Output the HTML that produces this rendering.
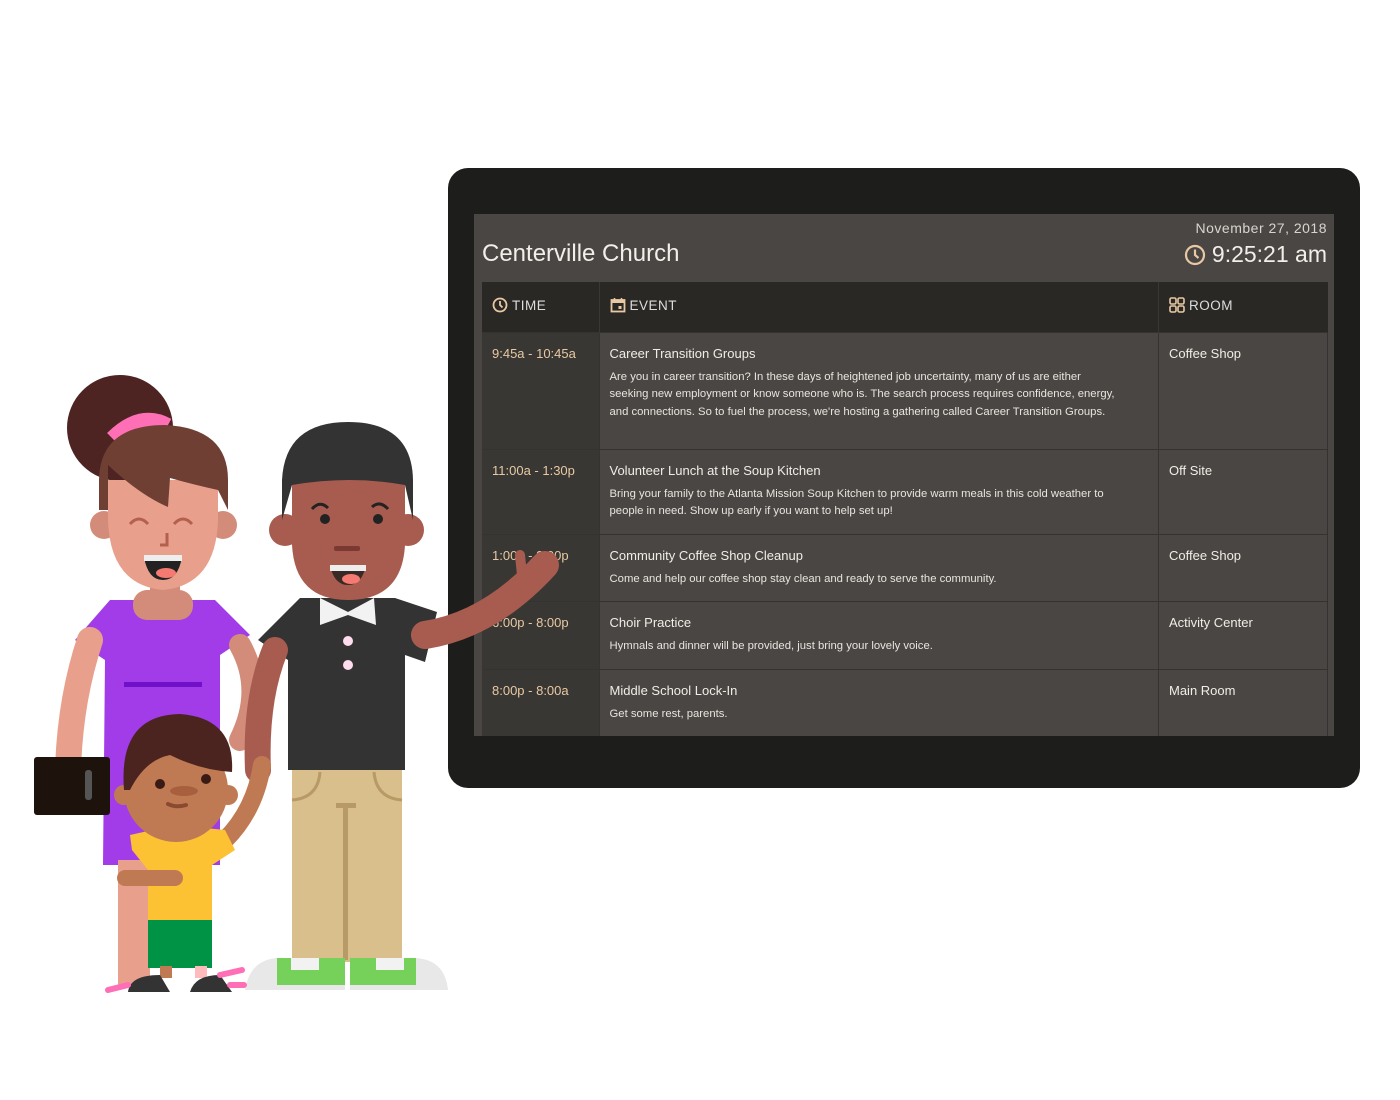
<!DOCTYPE html>
<html><head><meta charset="utf-8"><style>
*{margin:0;padding:0;box-sizing:border-box}
body{width:1400px;height:1100px;background:#fff;position:relative;overflow:hidden;font-family:"Liberation Sans",sans-serif}
.frame{position:absolute;left:448px;top:168px;width:912px;height:620px;background:#1d1d1b;border-radius:20px}
.screen{position:absolute;left:474px;top:214px;width:860px;height:522px;background:#4a4643}
.title{position:absolute;left:8px;top:26px;font-size:24px;color:#f2efea}
.date{position:absolute;right:7px;top:6px;font-size:14px;color:#d8d4cf;letter-spacing:.5px}
.clock{position:absolute;right:7px;top:27px;font-size:23px;color:#f2efea;display:flex;align-items:center;gap:6px}
table{position:absolute;left:8px;top:68px;width:846px;border-collapse:collapse;table-layout:fixed}
th{height:50px;background:#2a2825;color:#ddd;font-weight:normal;font-size:13.5px;text-align:left;padding-left:10px;letter-spacing:.5px;border-right:1px solid #3a3835}
th span{display:inline-flex;align-items:center;gap:4px}
td{vertical-align:top;padding:13px 10px;font-size:13px;color:#f0ece6;border-top:1px solid #353331;border-right:1px solid #353331}
td.t{background:#393733;color:#e8c9a4}
td p{font-size:11.3px;line-height:17.5px;margin-top:8px;color:#e8e4de;padding-right:28px}
</style></head><body>
<div class="frame"></div>
<div class="screen">
<div class="title">Centerville Church</div>
<div class="date">November 27, 2018</div>
<div class="clock"><svg width="22" height="22" viewBox="0 0 22 22"><circle cx="11" cy="11" r="9" fill="none" stroke="#e8c9a4" stroke-width="2.2"/><path d="M11 5.5V11l3.5 3" fill="none" stroke="#e8c9a4" stroke-width="2.2"/></svg>9:25:21 am</div>
<table>
<tr><th style="width:117px"><span><svg width="16" height="16" viewBox="0 0 16 16"><circle cx="8" cy="8" r="6.5" fill="none" stroke="#e8c9a4" stroke-width="1.8"/><path d="M8 4v4l2.5 2.5" fill="none" stroke="#e8c9a4" stroke-width="1.8"/></svg>TIME</span></th>
<th><span><svg width="16" height="16" viewBox="0 0 16 16"><rect x="1.5" y="3" width="13" height="11.5" fill="none" stroke="#e8c9a4" stroke-width="1.8"/><rect x="1.5" y="3" width="13" height="3" fill="#e8c9a4"/><path d="M4.5 1v3M11.5 1v3" stroke="#e8c9a4" stroke-width="1.6"/><rect x="8.5" y="9" width="3" height="3" fill="#e8c9a4"/></svg>EVENT</span></th>
<th style="width:169px;border-right:none"><span><svg width="16" height="16" viewBox="0 0 16 16" fill="none" stroke="#e8c9a4" stroke-width="1.6"><rect x="1" y="1" width="6" height="6" rx="1.5"/><rect x="9" y="1" width="6" height="6" rx="1.5"/><rect x="1" y="9" width="6" height="6" rx="1.5"/><rect x="9" y="9" width="6" height="6" rx="1.5"/></svg>ROOM</span></th></tr>
<tr style="height:117px"><td class="t">9:45a - 10:45a</td><td>Career Transition Groups<p>Are you in career transition? In these days of heightened job uncertainty, many of us are either seeking new employment or know someone who is. The search process requires confidence, energy, and connections. So to fuel the process, we're hosting a gathering called Career Transition Groups.</p></td><td>Coffee Shop</td></tr>
<tr style="height:83px"><td class="t">11:00a - 1:30p</td><td>Volunteer Lunch at the Soup Kitchen<p>Bring your family to the Atlanta Mission Soup Kitchen to provide warm meals in this cold weather to people in need. Show up early if you want to help set up!</p></td><td>Off Site</td></tr>
<tr style="height:66px"><td class="t">1:00p - 2:00p</td><td>Community Coffee Shop Cleanup<p>Come and help our coffee shop stay clean and ready to serve the community.</p></td><td>Coffee Shop</td></tr>
<tr style="height:66px"><td class="t">6:00p - 8:00p</td><td>Choir Practice<p>Hymnals and dinner will be provided, just bring your lovely voice.</p></td><td>Activity Center</td></tr>
<tr style="height:66px"><td class="t">8:00p - 8:00a</td><td>Middle School Lock-In<p>Get some rest, parents.</p></td><td>Main Room</td></tr>
</table>
</div>
<svg style="position:absolute;left:0;top:0" width="1400" height="1100" viewBox="0 0 1400 1100">
<circle cx="120" cy="428" r="53" fill="#4e2422"/>
<path d="M112 438 Q140 410 168 425" stroke="#ff6fb5" stroke-width="14" fill="none"/>
<path d="M75 640 L110 600 L215 600 L250 635 L220 655 L220 865 L103 865 L105 660 Z" fill="#a23ce8"/>
<rect x="124" y="682" width="78" height="5" fill="#7010c8"/>
<path d="M90 640 Q70 700 68 770" stroke="#e8a08c" stroke-width="26" fill="none" stroke-linecap="round"/>
<path d="M240 645 Q265 690 240 740" stroke="#d48c7a" stroke-width="22" fill="none" stroke-linecap="round"/>
<rect x="34" y="757" width="76" height="58" rx="3" fill="#1e120d"/>
<rect x="85" y="770" width="7" height="30" rx="3" fill="#555"/>
<rect x="118" y="860" width="32" height="125" fill="#e8a08c"/>
<rect x="150" y="555" width="30" height="40" fill="#d48c7a"/>
<rect x="133" y="590" width="60" height="30" rx="14" fill="#d48c7a"/>
<circle cx="104" cy="525" r="14" fill="#d48c7a"/><circle cx="223" cy="525" r="14" fill="#d48c7a"/>
<path d="M108 480 L108 520 Q110 585 163 590 Q216 585 218 520 L218 480 Z" fill="#e8a08c"/>
<path d="M99 510 L99 480 Q100 425 165 425 Q228 428 228 480 L228 510 L218 490 Q195 485 170 478 L168 507 Q140 495 108 465 L108 510 Z" fill="#6f3f34"/>
<path d="M130 524 Q139 514 148 524 M174 524 Q183 514 192 524" stroke="#b5604f" stroke-width="3" fill="none"/>
<path d="M167 533 V545 H160" stroke="#b5604f" stroke-width="3" fill="none"/>
<path d="M144 557 H182 Q178 580 163 580 Q148 580 144 557 Z" fill="#222"/>
<rect x="144" y="555" width="38" height="6" fill="#eee"/>
<ellipse cx="166" cy="573" rx="10" ry="5" fill="#f47a72"/>
<path d="M258 640 L300 598 L395 598 L437 612 L425 662 L405 655 L405 770 L288 770 L288 660 Z" fill="#333"/>
<path d="M320 598 L348 612 L374 598 L376 625 L348 615 L320 625 Z" fill="#f2f2f2"/>
<circle cx="348" cy="641" r="5" fill="#fde"/><circle cx="348" cy="665" r="5" fill="#fde"/>
<path d="M425 635 Q490 625 545 565" stroke="#a85c50" stroke-width="28" fill="none" stroke-linecap="round"/>
<path d="M522 575 L520 555" stroke="#a85c50" stroke-width="10" stroke-linecap="round"/>
<path d="M275 650 Q255 700 258 770" stroke="#a85c50" stroke-width="26" fill="none" stroke-linecap="round"/>
<rect x="292" y="770" width="110" height="192" fill="#d9bf8c"/>
<rect x="343" y="803" width="5" height="157" fill="#b89a66"/><rect x="336" y="803" width="20" height="5" fill="#b89a66"/>
<path d="M292 800 Q318 798 320 772 M402 800 Q376 798 374 772" stroke="#b89a66" stroke-width="3" fill="none"/>
<path d="M245 990 Q250 960 277 958 L345 958 L345 990 Z M350 958 L416 958 Q445 960 448 990 L350 990 Z" fill="#e8e8e8"/>
<rect x="277" y="958" width="68" height="27" fill="#76d15a"/><rect x="350" y="958" width="66" height="27" fill="#76d15a"/>
<rect x="291" y="958" width="28" height="12" fill="#f2f2f2"/><rect x="376" y="958" width="28" height="12" fill="#f2f2f2"/>
<circle cx="285" cy="530" r="16" fill="#a85c50"/><circle cx="408" cy="530" r="16" fill="#a85c50"/>
<path d="M292 470 L292 545 Q295 600 348 600 Q402 600 405 545 L405 470 Z" fill="#a85c50"/>
<path d="M282 520 L282 480 Q285 422 348 422 Q412 422 413 480 L413 520 L405 485 Q350 475 292 485 Z" fill="#333"/>
<circle cx="325" cy="519" r="5" fill="#222"/><circle cx="378" cy="519" r="5" fill="#222"/>
<path d="M312 509 Q320 500 328 508 M372 507 Q380 500 388 509" stroke="#222" stroke-width="3" fill="none"/>
<rect x="334" y="546" width="26" height="5" rx="2" fill="#7a3a32"/>
<path d="M330 565 H366 Q362 585 348 585 Q334 585 330 565 Z" fill="#3a2a25"/>
<rect x="330" y="565" width="36" height="6" fill="#eee"/>
<ellipse cx="351" cy="579" rx="9" ry="5" fill="#f47a72"/>
<path d="M225 840 Q255 810 262 765" stroke="#c07a53" stroke-width="18" fill="none" stroke-linecap="round"/>
<path d="M130 835 L175 825 L225 830 L235 850 L212 865 L212 925 L148 925 L148 870 L132 850 Z" fill="#fcc233"/>
<path d="M125 878 H175" stroke="#c07a53" stroke-width="16" stroke-linecap="round"/>
<rect x="148" y="920" width="64" height="48" fill="#009245"/>
<rect x="160" y="966" width="12" height="12" fill="#c07a53"/><rect x="195" y="966" width="12" height="12" fill="#fbb"/>
<path d="M128 992 Q130 975 160 975 L170 992 Z M190 992 Q195 975 220 975 L232 992 Z" fill="#333"/>
<path d="M108 990 L128 985 M220 975 L242 970 M230 985 L244 985" stroke="#ff6fb5" stroke-width="6" stroke-linecap="round"/>
<circle cx="124" cy="795" r="10" fill="#c07a53"/><circle cx="228" cy="795" r="10" fill="#c07a53"/>
<circle cx="176" cy="790" r="52" fill="#c07a53"/>
<path d="M124 790 Q118 715 180 714 Q235 718 232 772 Q200 770 170 755 Q145 760 130 790 Z" fill="#4b2420"/>
<circle cx="160" cy="784" r="5" fill="#3a1a15"/><circle cx="206" cy="779" r="5" fill="#3a1a15"/>
<ellipse cx="184" cy="791" rx="14" ry="5" fill="#a85f3e"/>
<path d="M168 804 Q176 808 186 805" stroke="#8a4a30" stroke-width="4" stroke-linecap="round" fill="none"/>
</svg>
</body></html>
